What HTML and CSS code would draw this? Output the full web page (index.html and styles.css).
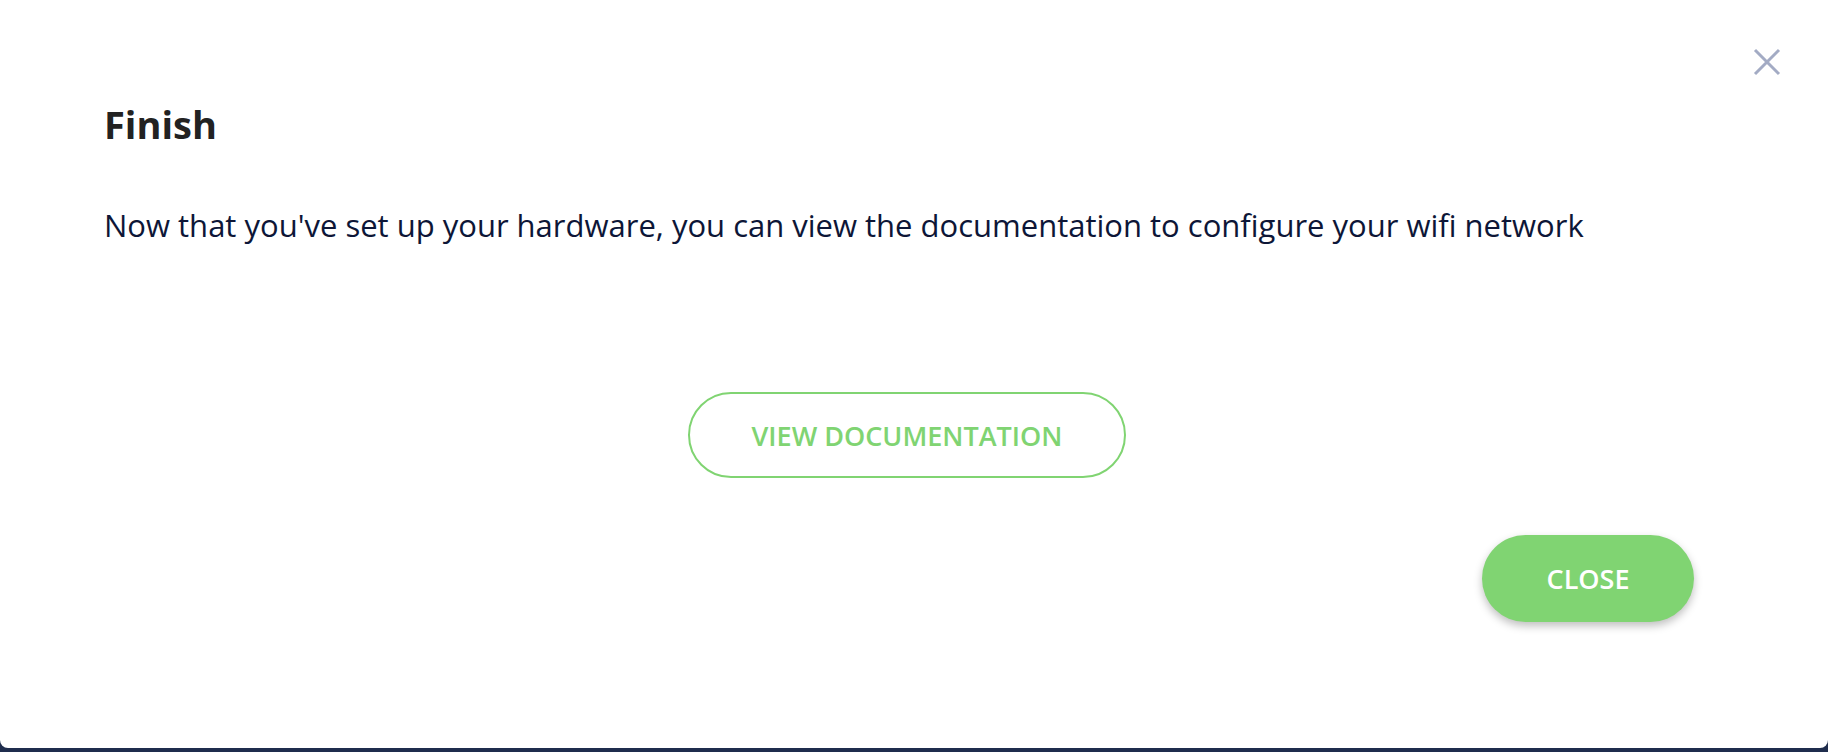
FILE: index.html
```html
<!DOCTYPE html>
<html lang="en">

<head>
    <meta charset="UTF-8" />
    <meta name="viewport" content="width=device-width, initial-scale=1.0" />
    <title>Finish</title>
    <link rel="stylesheet" href="styles.css">
</head>

<body>
    <div class="modal">
        <button class="modal__close" aria-label="Close">
            <svg width="28" height="28" viewBox="0 0 28 28">
                <path d="M2 2 L26 26 M26 2 L2 26" stroke="#a3abc4" stroke-width="3" fill="none" />
            </svg>
        </button>

        <h2 class="modal__title">Finish</h2>
        <p class="modal__text">Now that you've set up your hardware, you can view the documentation to configure your wifi network</p>

        <div class="modal__actions">
            <button class="btn__outline">View Documentation</button>
        </div>

        <div class="modal__footer">
            <button class="btn__primary">Close</button>
        </div>
    </div>
</body>

</html>
```

FILE: styles.css
```css
body {
    font-family: "Open Sans", Arial, sans-serif;
    background-color: #1f2d4d;
    /* Dark backdrop behind the dialog */
    margin: 0;
    padding: 0;
}

.modal {
    position: relative;
    box-sizing: border-box;
    height: 748px;
    padding: 101px 134px 0 104px;
    background-color: #fff;
    border-radius: 0 0 8px 8px;
}

.modal__close {
    position: absolute;
    top: 48px;
    right: 47px;
    width: 28px;
    height: 28px;
    padding: 0;
    border: none;
    background: none;
    cursor: pointer;
}

.modal__close svg {
    display: block;
}

.modal__title {
    margin: 0;
    font-size: 38px;
    line-height: 46px;
    font-weight: 700;
    color: #222;
}

.modal__text {
    margin: 58px 0 0;
    font-size: 31px;
    line-height: 40px;
    color: #0d1637;
}

.modal__actions {
    display: flex;
    justify-content: center;
    margin-top: 147px;
    /* Button sits slightly right of the content center */
    padding-left: 16px;
}

.btn__outline {
    box-sizing: border-box;
    width: 438px;
    height: 86px;
    border: 2px solid #80d472;
    border-radius: 43px;
    background-color: #fff;
    color: #80d472;
    font-family: inherit;
    font-size: 27px;
    font-weight: 600;
    text-transform: uppercase;
    cursor: pointer;
}

.modal__footer {
    display: flex;
    justify-content: flex-end;
    margin-top: 57px;
}

.btn__primary {
    width: 212px;
    height: 87px;
    border: none;
    border-radius: 44px;
    background-color: #80d472;
    color: #fff;
    font-family: inherit;
    font-size: 27px;
    font-weight: 600;
    text-transform: uppercase;
    box-shadow: 0 4px 8px rgba(0, 0, 0, 0.25);
    cursor: pointer;
}
```
